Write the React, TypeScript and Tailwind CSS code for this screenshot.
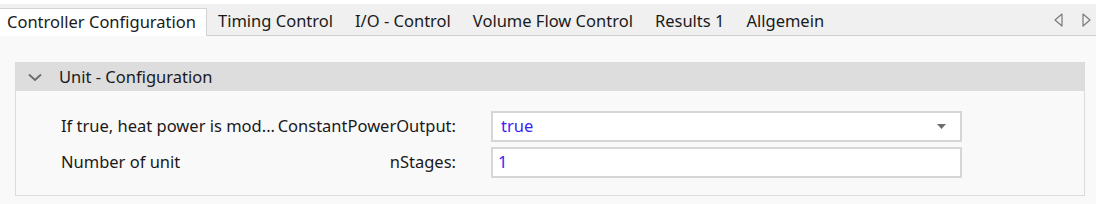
import React from "react";

const tabs = ["Timing Control", "I/O - Control", "Volume Flow Control", "Results 1", "Allgemein"];

export default function App() {
  return (
    <div
      className="w-[1096px] h-[204px] bg-white text-[16.5px] text-[#1a1a1a] overflow-hidden"
      style={{ fontFamily: '"Segoe UI", "Noto Sans", "Open Sans", sans-serif' }}
    >
      {/* tab strip */}
      <div className="mt-[4px] h-[32px] bg-[#f0f0f0] border-b border-[#cfcfcf] flex items-end relative">
        <div className="h-[28px] bg-white border-t border-r border-[#d4d4d4] -mb-px pl-[7px] pr-[10px] flex items-center leading-none">
          Controller Configuration
        </div>
        {tabs.map((t) => (
          <div key={t} className="h-[28px] px-[11px] flex items-center leading-none">
            {t}
          </div>
        ))}
        <div className="ml-auto h-[31px] flex items-center gap-[19px] pr-[5px]">
          <svg width="9" height="14" viewBox="0 0 9 14">
            <path d="M8 1 L1 7 L8 13 Z" fill="none" stroke="#7a7a7a" strokeWidth="1.2" strokeLinejoin="round" />
          </svg>
          <svg width="9" height="14" viewBox="0 0 9 14">
            <path d="M1 1 L8 7 L1 13 Z" fill="none" stroke="#7a7a7a" strokeWidth="1.2" strokeLinejoin="round" />
          </svg>
        </div>
      </div>

      {/* content */}
      <div className="bg-[#f9f9f9] h-[168px] pl-[15px] pt-[26px]">
        <div className="w-[1070px] border border-[#dcdcdc]">
          <div className="h-[28px] bg-[#dddddd] flex items-center pl-[12px]">
            <svg width="14" height="9" viewBox="0 0 14 9" className="mr-[17px]">
              <path d="M1 1.5 L7 7 L13 1.5" fill="none" stroke="#6b6b6b" strokeWidth="1.8" />
            </svg>
            <span className="leading-none">Unit - Configuration</span>
          </div>
          <div className="pl-[45px] pt-[20px] pb-[17px] flex flex-col gap-[5px]">
            <div className="flex items-center">
              <div className="w-[395px] flex justify-between whitespace-nowrap">
                <span>If true, heat power is mod...</span>
                <span>ConstantPowerOutput:</span>
              </div>
              <div className="ml-[35px] w-[471px] h-[31px] bg-white border-2 border-[#d6d6d6] flex items-center pl-[8px] pr-[14px]">
                <span className="text-[#3b1ef0]">true</span>
                <svg width="9" height="5" viewBox="0 0 9 5" className="ml-auto">
                  <path d="M0 0 L9 0 L4.5 5 Z" fill="#6e6e6e" />
                </svg>
              </div>
            </div>
            <div className="flex items-center">
              <div className="w-[395px] flex justify-between whitespace-nowrap">
                <span>Number of unit</span>
                <span>nStages:</span>
              </div>
              <div className="ml-[35px] w-[471px] h-[31px] bg-white border-2 border-[#d6d6d6] flex items-center pl-[5px]">
                <span className="text-[#3b1ef0]">1</span>
              </div>
            </div>
          </div>
        </div>
      </div>
    </div>
  );
}
